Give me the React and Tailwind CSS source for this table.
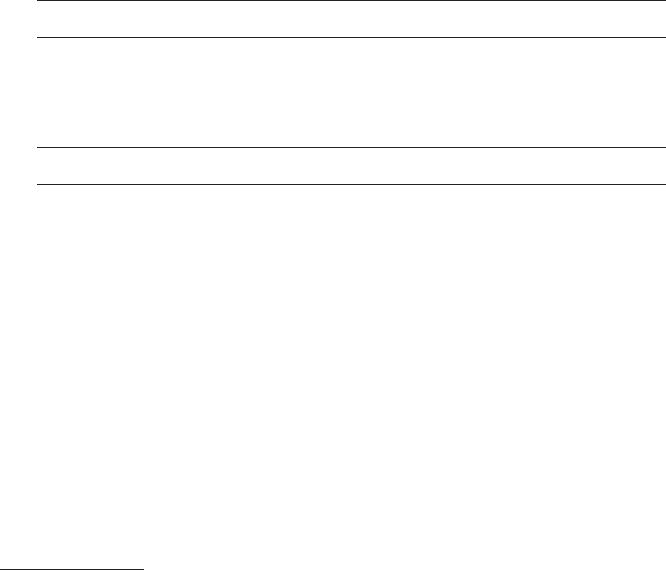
export default function App() {
  return (
    <div className="w-[666px] h-[570px] overflow-hidden bg-white">
      <div className="ml-[37px]">
        <div className="h-[37px] border-t border-[#222]" />
        <div className="h-[110px] border-t border-[#222]" />
        <div className="h-[37px] border-t border-[#222]" />
        <div className="h-[385px] border-t border-[#222]" />
      </div>
      <div className="w-[144px] border-t border-[#222]" />
    </div>
  )
}
